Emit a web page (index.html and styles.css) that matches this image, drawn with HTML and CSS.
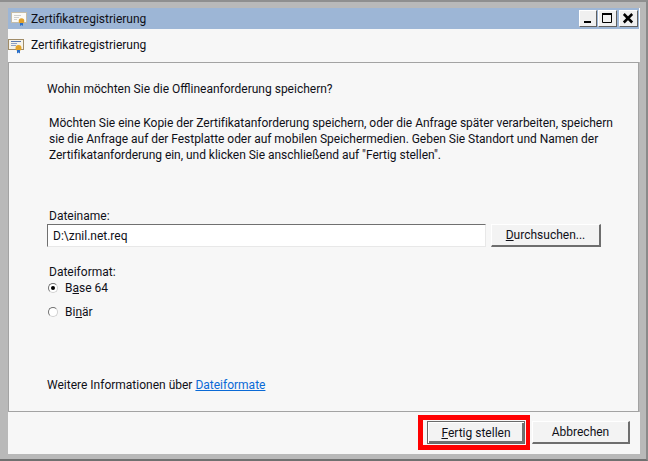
FILE: index.html
```html
<!DOCTYPE html>
<html lang="de">
<head>
<meta charset="utf-8">
<title>Zertifikatregistrierung</title>
<link rel="stylesheet" href="styles.css">
</head>
<body>
<div class="window">
  <div class="titlebar">
    <svg class="cert-small" width="18" height="16" viewBox="0 0 18 16"><rect x="0.5" y="1.500" width="15" height="10" fill="#fbfaf6" stroke="#c4bca8"/><path d="M3 4.500h7M3 6.500h5M3 8.500h3" stroke="#cfcfcf"/><circle cx="10.500" cy="10" r="2.800" fill="#dfa02c"/><path d="M9 12v3l1.500-1 1.500 1v-3" fill="#2a6fc9"/></svg>
    <span class="title">Zertifikatregistrierung</span>
    <div class="controls">
      <div class="ctl ctl-min"><svg width="16" height="15" viewBox="0 0 16 15"><rect x="4" y="10" width="7" height="2" fill="#000"/></svg></div>
      <div class="ctl ctl-max"><svg width="17" height="15" viewBox="0 0 17 15"><path d="M3.500 2.500h9v9h-9z" fill="none" stroke="#000"/><rect x="3" y="2" width="10" height="2" fill="#000"/></svg></div>
      <div class="ctl"><svg width="17" height="15" viewBox="0 0 17 15"><path d="M3.800 3l8.400 8.500M12.200 3l-8.400 8.500" stroke="#000" stroke-width="2.500"/></svg></div>
    </div>
  </div>
  <div class="header">
    <svg width="18" height="18" viewBox="0 0 18 18"><rect x="0.500" y="3.500" width="15" height="10" fill="#f6f3ea" stroke="#a08c68"/><path d="M3 5.500h10" stroke="#5a78b0"/><path d="M3 7.500h6M3 9.500h5" stroke="#8ea0c4"/><circle cx="10.500" cy="12" r="3" fill="#e3a32a"/><path d="M9 14v3.500l1.500-1 1.500 1v-3.500" fill="#2a6fc9"/></svg>
    <span>Zertifikatregistrierung</span>
  </div>
  <div class="panel">
    <p class="question">Wohin möchten Sie die Offlineanforderung speichern?</p>
    <p class="intro">Möchten Sie eine Kopie der Zertifikatanforderung speichern, oder die Anfrage später verarbeiten, speichern<br>sie die Anfrage auf der Festplatte oder auf mobilen Speichermedien. Geben Sie Standort und Namen der<br>Zertifikatanforderung ein, und klicken Sie anschließend auf "Fertig stellen".</p>
    <div class="label">Dateiname:</div>
    <div class="file-row">
      <input class="file-input" type="text" value="D:\znil.net.req">
      <button class="btn browse" type="button"><u>D</u>urchsuchen...</button>
    </div>
    <div class="format-label">Dateiformat:</div>
    <div class="radio-row first"><span class="radio on"></span><span>B<u>a</u>se 64</span></div>
    <div class="radio-row"><span class="radio"></span><span>Bi<u>n</u>är</span></div>
    <p class="more">Weitere Informationen über <a href="#">Dateiformate</a></p>
  </div>
  <div class="footer">
    <button class="btn finish" type="button"><u>F</u>ertig stellen</button>
    <button class="btn cancel" type="button">Abbrechen</button>
  </div>
</div>
</body>
</html>
```
FILE: styles.css
```css
* { box-sizing: border-box; }
html, body { margin: 0; padding: 0; }
body { width: 648px; height: 461px; overflow: hidden; background: #b9b9b9; font: 12px/16px Roboto, "Noto Sans", sans-serif; color: #101018; }
.window { width: 648px; height: 461px; padding: 6px 6px 5px 8px; border-top: 2px solid #8f8f8f; border-bottom: 2px solid #707070; border-right: 2px solid #8a8a8a; display: flex; flex-direction: column; }
.titlebar { height: 21px; flex: none; background: #9db6d6; display: flex; align-items: center; padding-left: 3px; border-right: 1px solid #fff; }
.cert-small { flex: none; margin-right: 2px; }
.title { flex: 1; }
.controls { display: flex; margin-right: 1px; }
.ctl { width: 19px; height: 17px; background: #f0f0f0; border: 1px solid; border-color: #fff #606060 #606060 #fff; display: flex; align-items: center; justify-content: center; }
.ctl-min { width: 18px; margin-right: 1px; }
.ctl-max { margin-right: 2px; }
.header { height: 33px; flex: none; background: #f7f7f7; display: flex; align-items: flex-start; gap: 5px; padding-top: 8px; }
.header svg { margin-top: -1px; }
.panel { height: 350px; flex: none; background: #f7f7f7; border: 1px solid #a3a3a3; padding-left: 38px; display: flex; flex-direction: column; margin-right: 1px; }
.question { margin: 18px 0 0; }
.intro { margin: 18px 0 0 2px; line-height: 16px; letter-spacing: -0.03px; }
.label { margin: 45px 0 0 2px; }
.file-row { display: flex; gap: 5px; margin: 0; }
.file-input { width: 439px; height: 23px; padding: 0 0 0 5px; border: 1px solid; border-color: #707070 #e8e8e8 #e8e8e8 #707070; background: #fff; font: inherit; color: inherit; outline: none; }
.btn { font: inherit; color: inherit; background: #f3f3f3; padding: 0; border: 1px solid; border-color: #fff #6e6e6e #6e6e6e #fff; border-width: 1px 2px 2px 1px; }
.browse { width: 110px; height: 23px; }
.format-label { margin: 17px 0 0 2px; }
.radio-row { display: flex; align-items: center; gap: 7px; height: 16px; margin-left: 1px; }
.radio-row.first { margin-top: 0; margin-bottom: 8px; }
.radio { width: 10px; height: 10px; border-radius: 50%; background: #fff; border: 1px solid; border-color: #707070 #d0d0d0 #d0d0d0 #707070; position: relative; flex: none; }
.radio.on::after { content: ""; position: absolute; left: 2px; top: 2px; width: 4px; height: 4px; border-radius: 50%; background: #000; }
.more { margin: 57px 0 0; }
.more a { color: #0a6ad6; }
.footer { flex: 1; background: #f7f7f7; display: flex; justify-content: flex-end; align-items: flex-start; gap: 7px; padding: 9px 10px 0 0; }
.finish { width: 98px; height: 23px; border: 1px solid #6a6a6a; box-shadow: inset 1px 1px 0 #fff, inset -2px -2px 0 #707070; position: relative; }
.finish::after { content: ""; position: absolute; left: -10px; right: -6px; top: -7px; bottom: -7px; border: 5px solid #f00; border-right-width: 4px; pointer-events: none; }
.cancel { width: 98px; height: 23px; }
```
